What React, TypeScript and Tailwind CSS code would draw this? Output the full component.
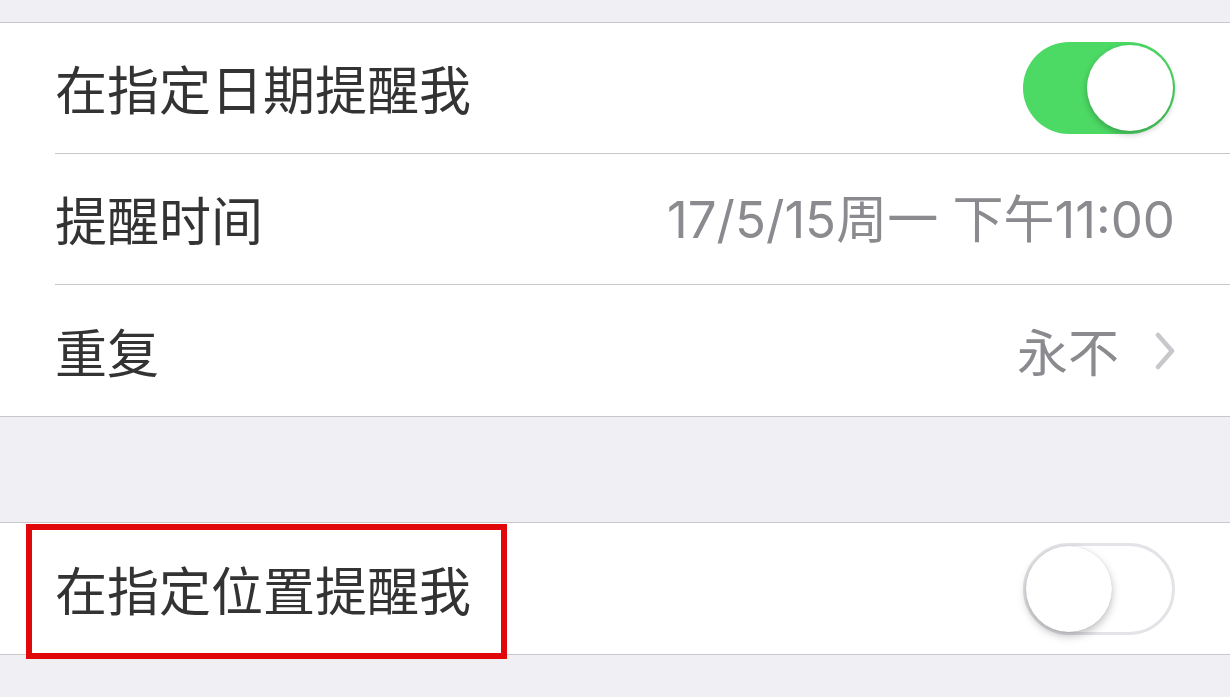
import React from "react";

const font = { fontFamily: '"Noto Sans CJK SC", "Noto Sans", sans-serif' };
const numFont = { fontFamily: 'Inter, "Noto Sans CJK SC", sans-serif' };

function Toggle({ on }: { on: boolean }) {
  if (on) {
    return (
      <div className="relative h-[92px] w-[152px] rounded-full bg-[#4cd964]">
        <div className="absolute right-[2px] top-[3px] h-[86px] w-[86px] rounded-full bg-white shadow-[0_3px_6px_rgba(0,0,0,0.25)]" />
      </div>
    );
  }
  return (
    <div className="relative h-[92px] w-[152px] rounded-full border-[3px] border-[#e3e3e8] bg-white">
      <div className="absolute left-[0px] top-[0px] h-[86px] w-[86px] rounded-full bg-white shadow-[0_4px_8px_rgba(0,0,0,0.25),0_0_1px_rgba(0,0,0,0.2)]" />
    </div>
  );
}

function Row({
  label,
  right,
  separator,
}: {
  label: string;
  right: React.ReactNode;
  separator: boolean;
}) {
  return (
    <div className="pl-[55px]">
      <div
        className={`flex h-[131px] items-center justify-between pr-[55px] ${
          separator ? "border-b border-[#c8c7cc]" : ""
        }`}
      >
        <span className="text-[52px] leading-none text-[#333333]">{label}</span>
        {right}
      </div>
    </div>
  );
}

export default function App() {
  return (
    <div className="h-[697px] w-[1230px] overflow-hidden bg-[#efeff4]" style={font}>
      <div className="h-[22px]" />
      <div className="border-y border-[#c8c7cc] bg-white">
        <Row label="在指定日期提醒我" right={<Toggle on />} separator />
        <Row
          label="提醒时间"
          right={
            <span className="text-[51px] leading-none text-[#8a8a8f]" style={numFont}>
              17/5/15周一 下午11:00
            </span>
          }
          separator
        />
        <Row
          label="重复"
          right={
            <div className="flex items-center gap-[36px]">
              <span className="text-[51px] leading-none text-[#8a8a8f]">永不</span>
              <svg width="20" height="38" viewBox="0 0 20 38" fill="none">
                <path
                  d="M3 3 L17 19 L3 35"
                  stroke="#c7c7cc"
                  strokeWidth="4.5"
                  strokeLinecap="round"
                  strokeLinejoin="round"
                />
              </svg>
            </div>
          }
          separator={false}
        />
      </div>
      <div className="h-[105px]" />
      <div className="relative border-y border-[#c8c7cc] bg-white">
        <Row label="在指定位置提醒我" right={<Toggle on={false} />} separator={false} />
        <div className="pointer-events-none absolute left-[26px] top-[1px] h-[135px] w-[481px] border-[6px] border-[#e0080b]" />
      </div>
    </div>
  );
}
